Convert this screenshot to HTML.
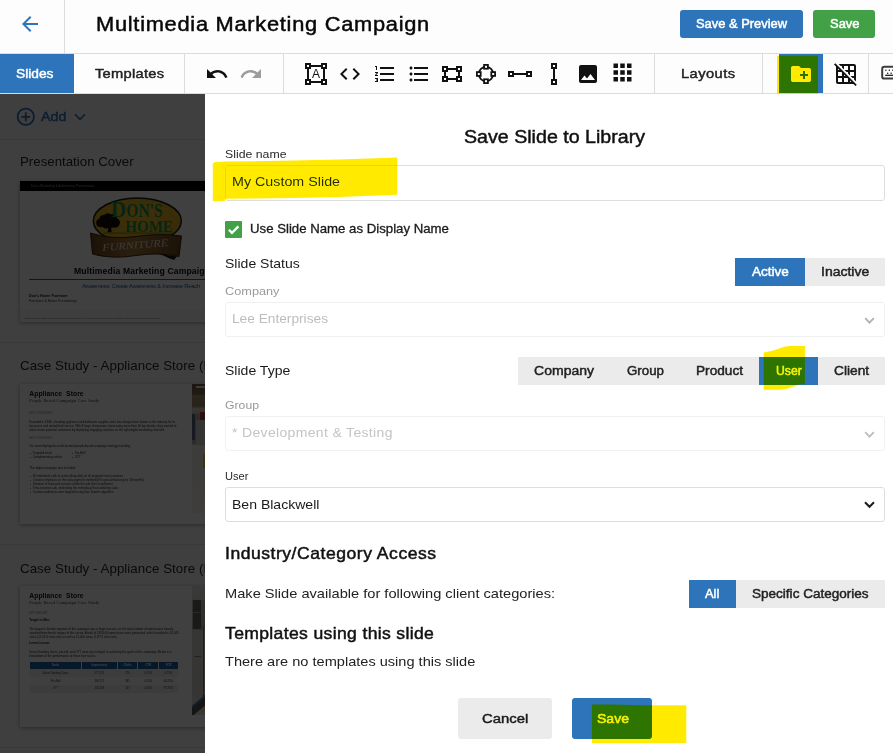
<!DOCTYPE html>
<html lang="en">
<head>
<meta charset="utf-8">
<title>Save Slide to Library</title>
<style>
html,body{margin:0;padding:0;overflow:hidden;}
body{width:893px;height:753px;overflow:hidden;background:#fdfdfd;font-family:"Liberation Sans",sans-serif;}
#root{position:relative;width:893px;height:753px;overflow:hidden;background:#fdfdfd;}
.abs{position:absolute;}
.t{position:absolute;white-space:pre;line-height:1;font-family:"Liberation Sans",sans-serif;transform-origin:0 50%;}
.vl{position:absolute;width:1px;background:#dcdcdc;}
.hl{position:absolute;height:1px;background:#dcdcdc;}
svg{position:absolute;overflow:visible;}
.btn{position:absolute;border-radius:3px;}
.seg{position:absolute;background:#ebebeb;}
.blue{background:#2e74ba;}
.hlt{position:absolute;background:#ffe800;mix-blend-mode:multiply;}
#sidebar{position:absolute;left:0;top:94px;width:205px;height:659px;background:#fafafa;overflow:hidden;}
#overlay{position:absolute;left:0;top:94px;width:205px;height:659px;background:rgba(0,0,0,0.75);}
#modal{position:absolute;left:205px;top:94px;width:688px;height:659px;background:#fff;}
.thumb{position:absolute;left:20px;width:250px;height:141px;background:#fff;box-shadow:0 1px 4px rgba(0,0,0,0.35);overflow:hidden;}
.sep{position:absolute;left:0;width:205px;height:1px;background:#e2e2e2;}
.field{position:absolute;left:225px;width:658px;border:1px solid #ddd;border-radius:3px;background:#fff;}
.tt{position:absolute;white-space:pre;line-height:1;}
td{padding:0;vertical-align:middle;overflow:hidden;}
</style>
</head>
<body>
<div id="root">

<!-- ===== top bar ===== -->
<div class="hl" style="left:0;top:53px;width:893px;"></div>
<div class="vl" style="left:64px;top:0;height:53px;"></div>
<svg style="left:18px;top:12px" width="24" height="24" viewBox="0 0 24 24"><path fill="#2e74ba" d="M20 11H7.83l5.59-5.59L12 4l-8 8 8 8 1.41-1.41L7.83 13H20v-2z"/></svg>
<div class="btn blue" style="left:680px;top:10px;width:123px;height:28px;"></div>
<div class="btn" style="left:813px;top:10px;width:62px;height:28px;background:#42a047;"></div>

<!-- ===== toolbar ===== -->
<div class="abs blue" style="left:0;top:54px;width:74px;height:39px;"></div>
<div class="hl" style="left:0;top:93px;width:893px;"></div>
<div class="vl" style="left:184px;top:54px;height:39px;"></div>
<div class="vl" style="left:283px;top:54px;height:39px;"></div>
<div class="vl" style="left:654px;top:54px;height:39px;"></div>
<div class="vl" style="left:762px;top:54px;height:39px;"></div>
<div class="vl" style="left:868px;top:54px;height:39px;"></div>
<svg style="left:205.3px;top:62.2px" width="24" height="24" viewBox="0 0 24 24"><path fill="#111" d="M12.5 8c-2.65 0-5.05.99-6.9 2.6L2 7v9h9l-3.62-3.62c1.39-1.16 3.16-1.88 5.12-1.88 3.54 0 6.55 2.31 7.6 5.5l2.37-.78C21.08 11.03 17.15 8 12.5 8z"/></svg>
<svg style="left:239.4px;top:62.2px" width="24" height="24" viewBox="0 0 24 24"><path fill="#9c9c9c" d="M18.4 10.6C16.55 8.99 14.15 8 11.5 8c-4.65 0-8.58 3.03-9.96 7.22L3.9 16c1.05-3.19 4.05-5.5 7.6-5.5 1.95 0 3.73.72 5.12 1.88L13 16h9V7l-3.6 3.6z"/></svg>
<svg style="left:338.0px;top:62.2px" width="24" height="24" viewBox="0 0 24 24"><path fill="#111" d="M9.4 16.6L4.8 12l4.6-4.6L8 6l-6 6 6 6 1.4-1.4zm5.2 0l4.6-4.6-4.6-4.6L16 6l6 6-6 6-1.4-1.4z"/></svg>
<svg style="left:373.2px;top:62.0px" width="24" height="24" viewBox="0 0 24 24"><path fill="#111" d="M2 17h2v.5H3v1h1v.5H2v1h3v-4H2v1zm1-9h1V4H2v1h1v3zm-1 3h1.8L2 13.1v.9h3v-1H3.2L5 10.9V10H2v1zm5-6v2h14V5H7zm0 14h14v-2H7v2zm0-6h14v-2H7v2z"/></svg>
<svg style="left:407.4px;top:62.0px" width="24" height="24" viewBox="0 0 24 24"><path fill="#111" d="M4 10.5c-.83 0-1.5.67-1.5 1.5s.67 1.5 1.5 1.5 1.5-.67 1.5-1.5-.67-1.5-1.5-1.5zm0-6c-.83 0-1.5.67-1.5 1.5S3.17 7.5 4 7.5 5.5 6.83 5.5 6 4.83 4.5 4 4.5zm0 12c-.83 0-1.5.68-1.5 1.5s.68 1.5 1.5 1.5 1.5-.68 1.5-1.5-.67-1.5-1.5-1.5zM7 19h14v-2H7v2zm0-6h14v-2H7v2zm0-8v2h14V5H7z"/></svg>
<svg style="left:576.0px;top:61.9px" width="24" height="24" viewBox="0 0 24 24"><path fill="#111" d="M21 19V5c0-1.1-.9-2-2-2H5c-1.1 0-2 .9-2 2v14c0 1.1.9 2 2 2h14c1.1 0 2-.9 2-2zM8.5 13.5l2.5 3.01L14.5 12l4.5 6H5l3.5-4.5z"/></svg>
<svg style="left:608.6px;top:59.4px" width="27" height="27" viewBox="0 0 24 24"><path fill="#111" d="M4 8h4V4H4v4zm6 12h4v-4h-4v4zm-6 0h4v-4H4v4zm0-6h4v-4H4v4zm6 0h4v-4h-4v4zm6-10v4h4V4h-4zm-6 4h4V4h-4v4zm6 6h4v-4h-4v4zm0 6h4v-4h-4v4z"/></svg>
<div class="abs blue" style="left:779px;top:54px;width:44px;height:39px;"></div>
<svg style="left:789.0px;top:62.0px" width="24" height="24" viewBox="0 0 24 24"><path fill="#fff" d="M20 6h-8l-2-2H4c-1.11 0-1.99.89-1.99 2L2 18c0 1.11.89 2 2 2h16c1.11 0 2-.89 2-2V8c0-1.11-.89-2-2-2zm-1 8h-3v3h-2v-3h-3v-2h3V9h2v3h3v2z"/></svg>
<svg style="left:833.5px;top:62.0px" width="24" height="24" viewBox="0 0 24 24"><path fill="#111" d="M8 4v1.45l2 2V4h4v4h-3.45l2 2H14v1.45l2 2V10h4v4h-3.45l2 2H20v1.45l2 2V4c0-1.1-.9-2-2-2H4.55l2 2H8zm8 0h4v4h-4V4zM1.27 1.27L0 2.55l2 2V20c0 1.1.9 2 2 2h15.46l2 2 1.27-1.27L1.27 1.27zM10 12.55L11.45 14H10v-1.45zm-6-6L5.45 8H4V6.55zM8 20H4v-4h4v4zm0-6H4v-4h3.45l.55.55V14zm6 6h-4v-4h3.45l.55.54V20zm2 0v-1.46L17.46 20H16z"/></svg>
<svg style="left:881px;top:65px" width="24" height="16" viewBox="0 0 24 16"><rect x="1.2" y="1.8" width="21" height="11.8" rx="2.2" fill="none" stroke="#3c3c3c" stroke-width="2"/><g fill="#222"><rect x="4.2" y="4.6" width="1.3" height="1.3"/><rect x="7.7" y="4.6" width="1.3" height="1.3"/><rect x="11.2" y="4.6" width="1.3" height="1.3"/><rect x="6" y="7.6" width="1.3" height="1.3"/><rect x="9.5" y="7.6" width="1.3" height="1.3"/><rect x="4.2" y="9.7" width="14" height="1.2" fill="#111"/></g></svg>
<svg style="left:305px;top:63px" width="22" height="22" viewBox="0 0 22 22"><rect x="3" y="3" width="16" height="16" fill="none" stroke="#111" stroke-width="2"/><rect x="1.00" y="1.00" width="4" height="4" fill="#fff" stroke="#111" stroke-width="2"/><rect x="17.00" y="1.00" width="4" height="4" fill="#fff" stroke="#111" stroke-width="2"/><rect x="1.00" y="17.00" width="4" height="4" fill="#fff" stroke="#111" stroke-width="2"/><rect x="17.00" y="17.00" width="4" height="4" fill="#fff" stroke="#111" stroke-width="2"/><text x="11" y="15.3" text-anchor="middle" font-family="Liberation Sans, sans-serif" font-size="12" fill="#111">A</text></svg>
<svg style="left:442px;top:66px" width="20" height="16" viewBox="0 0 20 16"><rect x="3" y="3" width="14" height="10" fill="none" stroke="#111" stroke-width="2"/><rect x="1.00" y="1.00" width="4" height="4" fill="#fff" stroke="#111" stroke-width="2"/><rect x="15.00" y="1.00" width="4" height="4" fill="#fff" stroke="#111" stroke-width="2"/><rect x="1.00" y="11.00" width="4" height="4" fill="#fff" stroke="#111" stroke-width="2"/><rect x="15.00" y="11.00" width="4" height="4" fill="#fff" stroke="#111" stroke-width="2"/></svg>
<svg style="left:476px;top:64px" width="20" height="20" viewBox="0 0 20 20"><circle cx="10" cy="10" r="7.2" fill="none" stroke="#111" stroke-width="1.8"/><rect x="8.10" y="0.90" width="3.8" height="3.8" fill="#fff" stroke="#111" stroke-width="1.8"/><rect x="8.10" y="15.30" width="3.8" height="3.8" fill="#fff" stroke="#111" stroke-width="1.8"/><rect x="0.90" y="8.10" width="3.8" height="3.8" fill="#fff" stroke="#111" stroke-width="1.8"/><rect x="15.30" y="8.10" width="3.8" height="3.8" fill="#fff" stroke="#111" stroke-width="1.8"/></svg>
<svg style="left:508px;top:71px" width="24" height="6" viewBox="0 0 24 6"><rect x="5" y="2" width="14" height="2" fill="#111"/><rect x="1.00" y="1.00" width="4" height="4" fill="#fff" stroke="#111" stroke-width="2"/><rect x="19.00" y="1.00" width="4" height="4" fill="#fff" stroke="#111" stroke-width="2"/></svg>
<svg style="left:551px;top:63px" width="6" height="22" viewBox="0 0 6 22"><rect x="2" y="5" width="2" height="12" fill="#111"/><rect x="1.00" y="1.00" width="4" height="4" fill="#fff" stroke="#111" stroke-width="2"/><rect x="1.00" y="17.00" width="4" height="4" fill="#fff" stroke="#111" stroke-width="2"/></svg>

<!-- ===== sidebar ===== -->
<div id="sidebar">
<div style="position:absolute;left:0;top:-94px;width:300px;height:753px;">
<!--SIDEBAR_START--><!-- add row -->
<svg style="left:15.2px;top:106px" width="21.6" height="21.6" viewBox="0 0 24 24"><path fill="#2e74ba" d="M13 7h-2v4H7v2h4v4h2v-4h4v-2h-4V7zm-1-5C6.48 2 2 6.48 2 12s4.48 10 10 10 10-4.48 10-10S17.52 2 12 2zm0 18c-4.41 0-8-3.59-8-8s3.59-8 8-8 8 3.59 8 8-3.59 8-8 8z"/></svg>
<svg style="left:74px;top:113px" width="12" height="8" viewBox="0 0 12 8"><path fill="none" stroke="#2e74ba" stroke-width="1.6" d="M1 1.2L6 6.4L11 1.2"/></svg>
<div class="sep" style="top:139px;"></div>
<div class="sep" style="top:342px;"></div>
<div class="sep" style="top:544px;"></div>
<div class="sep" style="top:747px;"></div>

<!-- slide 1 thumbnail -->
<div class="thumb" style="top:181px;">
 <div class="abs" style="left:0;top:0;width:250px;height:10px;background:#000;"></div>
 <span class="tt" style="left:11px;top:3.6px;font-size:3.3px;color:#9a9a9a;">Don's Marketing &amp; Advertising Presentation</span>
 <div class="abs" style="left:0;top:128.5px;width:250px;height:12.5px;background:#f7f7f7;"></div>
 <!-- logo -->
 <svg style="left:68px;top:14px" width="98" height="66" viewBox="88 195 98 66">
  <defs><linearGradient id="rb" x1="0" x2="1" y1="0" y2="0"><stop offset="0" stop-color="#6d4719"/><stop offset="0.45" stop-color="#a67b3c"/><stop offset="1" stop-color="#70491a"/></linearGradient>
  <radialGradient id="gd" cx="0.5" cy="0.4" r="0.7"><stop offset="0" stop-color="#f0c030"/><stop offset="1" stop-color="#d9a520"/></radialGradient></defs>
  <ellipse cx="137.3" cy="221" rx="44" ry="23" fill="url(#gd)" stroke="#221b06" stroke-width="1.5"/>
  <path d="M96.5 224.5 q-1.5 -4.5 3 -6 q0 -3.5 4.5 -3.5 q3 -3 7 -0.8 q5.5 -0.7 6 4 q4.5 2.5 2.3 6.8 q-1.2 3.3 -5.8 2.5 l-2.4 0.3 l0.6 4.4 l-4.2 0 l0.8 -4.3 q-3.7 1.6 -5.6 -0.8 q-5.2 0.6 -6.2 -2.6z" fill="#120f08"/>
  <rect x="103.5" y="232.7" width="72" height="0.7" fill="#1a8a44"/>
  <path d="M90.5 233 Q 112 240 136 236.5 Q 160 233 181.5 236 L 179 256.5 Q 158 252 136 255.5 Q 112 259.5 92.5 254 Z" fill="url(#rb)" stroke="#2a1a07" stroke-width="0.9"/>
  <path d="M160 254 L177 256.5 L174 260 Q168 258 160 254Z" fill="#1c1206"/>
  <text x="111" y="216.5" font-family="Liberation Serif, serif" font-weight="bold" font-size="23" fill="#1a9448" textLength="15.5" lengthAdjust="spacingAndGlyphs">D</text>
  <text x="126.5" y="216.5" font-family="Liberation Serif, serif" font-weight="bold" font-size="18.5" fill="#1a9448" textLength="36.5" lengthAdjust="spacingAndGlyphs">ON'S</text>
  <text x="125.6" y="231.9" font-family="Liberation Serif, serif" font-weight="bold" font-size="16.5" fill="#1a9448" textLength="47.5" lengthAdjust="spacingAndGlyphs">HOME</text>
  <text x="102.5" y="251" font-family="Liberation Serif, serif" font-size="10.2" font-style="italic" fill="#e9e0d0" textLength="66" lengthAdjust="spacingAndGlyphs" transform="rotate(-4.5 102.5 251)">FURNITURE</text>
 </svg>
 <span class="tt" style="left:54px;top:85.6px;font-size:8.6px;font-weight:bold;color:#0a0a0a;letter-spacing:0.15px;">Multimedia Marketing Campaign</span>
 <div class="abs" style="left:9px;top:98.3px;width:241px;height:0.6px;background:#555;"></div>
 <span class="tt" style="left:62px;top:101.8px;font-size:6px;color:#2a5d9f;letter-spacing:-0.3px;">Awareness: Create Awareness &amp; Increase Reach</span>
 <span class="tt" style="left:9px;top:113.7px;font-size:3.7px;font-weight:bold;color:#111;">Don's Home Furniture</span>
 <span class="tt" style="left:9px;top:118.9px;font-size:3.6px;color:#333;">Furniture &amp; Home Furnishings</span>
 <span class="tt" style="left:5px;top:137.2px;font-size:1.9px;color:#666;letter-spacing:0.02px;">This presentation contains confidential data and is intended solely for the named recipient. Unauthorised distribution of any part of this document is prohibited.</span>
</div>

<!-- slide 2 thumbnail -->
<div class="thumb" style="top:384px;height:140px;">
 <div class="abs" style="left:172px;top:0;width:78px;height:129px;overflow:hidden;background:linear-gradient(180deg,#6f6044 0,#7d6c4c 8%,#a89474 9%,#9c8864 17%,#e2d8c2 19%,#d6ccb8 22%,#b4b0aa 24%,#aeaaa4 46%,#f4f3ef 48%,#f0efeb 51%,#f2f1ed 100%);"><div class="abs" style="left:4px;top:2px;width:9px;height:2px;background:#efe8d8;"></div><div class="abs" style="left:8px;top:28px;width:6px;height:9px;background:#b83a3a;"></div><div class="abs" style="left:0;top:30px;width:3px;height:26px;background:#5a6478;"></div><div class="abs" style="left:4px;top:36px;width:9px;height:24px;background:#cfcdc8;"></div><div class="abs" style="left:11px;top:70px;width:3px;height:14px;background:#e8d020;"></div></div>
 <span class="tt" style="left:9.3px;top:6.5px;font-size:6.7px;font-weight:bold;color:#111;letter-spacing:0.1px;">Appliance  Store</span>
 <span class="tt" style="left:9.3px;top:15.1px;font-size:4.3px;font-weight:bold;color:#777;font-family:'Liberation Serif',serif;letter-spacing:0.12px;">People Based Campaign Case Study</span>
 <span class="tt" style="left:9.3px;top:28.1px;font-size:2.9px;color:#888;">KEY CONCERNS</span>
 <span class="tt" style="left:9.3px;top:36.3px;font-size:2.95px;color:#222;line-height:4.05px;width:150px;white-space:normal;">Founded in 1949, a leading appliance and bathroom supplies store has always been known in the industry for its low prices and unmatched service. With 8 large showrooms showcasing more than 50 top brands, they wanted to attract more potential customers by deploying engaging creatives on the right digital marketing channels.</span>
 <span class="tt" style="left:9.3px;top:53.1px;font-size:2.9px;color:#888;">KEY CONCERNS</span>
 <span class="tt" style="left:9.3px;top:61.1px;font-size:2.95px;color:#222;">Our team deployed a multi-faceted people-based campaign strategy including:</span>
 <span class="tt" style="left:10px;top:68.1px;font-size:2.95px;color:#222;">▪  Targeted email</span>
 <span class="tt" style="left:10px;top:71.5px;font-size:2.95px;color:#222;">▪  Complementary online</span>
 <span class="tt" style="left:52px;top:68.1px;font-size:2.95px;color:#222;">▪  Pre-Roll</span>
 <span class="tt" style="left:52px;top:71.5px;font-size:2.95px;color:#222;">▪  OTT</span>
 <span class="tt" style="left:9.3px;top:83.1px;font-size:2.95px;color:#222;">This digital campaign also included:</span>
 <span class="tt" style="left:10px;top:90.1px;font-size:2.95px;color:#222;line-height:4.02px;">▪  30 intentional calls to action (drop-offs) on all targeted email creatives
▪  Creative emphasis on the easy payment method (0% special financing for 18 months)
▪  Variation of front-end services within the ads (free installation)
▪  Time-sensitive ads, motivating the immediacy that called big sales
▪  Custom audiences were targeted using Don Imports algorithm</span>
</div>

<!-- slide 3 thumbnail -->
<div class="thumb" style="top:586px;height:141px;">
 <div class="abs" style="left:172px;top:0;width:78px;height:129px;overflow:hidden;background:linear-gradient(180deg,#e6e4e0 0,#dedcd8 10%,#c0beba 12%,#b8b6b2 33%,#d8d6d2 35%,#d4d2ce 80%,#e0deda 100%);"><div class="abs" style="left:1px;top:14px;width:8px;height:29px;background:#6a6866;"></div><div class="abs" style="left:1px;top:26px;width:8px;height:1px;background:#a09e9a;"></div><div class="abs" style="left:11px;top:40px;width:1px;height:70px;background:#7a7876;"></div><div class="abs" style="left:2px;top:70px;width:7px;height:1px;background:#8a8886;"></div><div class="abs" style="left:-6px;top:125px;width:40px;height:6px;background:#55534f;transform:rotate(-40deg);transform-origin:0 0;border-top:2px solid #4a78b0;"></div></div>
 <span class="tt" style="left:9.3px;top:6.5px;font-size:6.7px;font-weight:bold;color:#111;letter-spacing:0.1px;">Appliance  Store</span>
 <span class="tt" style="left:9.3px;top:15.1px;font-size:4.3px;font-weight:bold;color:#777;font-family:'Liberation Serif',serif;letter-spacing:0.12px;">People Based Campaign Case Study</span>
 <span class="tt" style="left:9.3px;top:26.1px;font-size:2.9px;color:#888;">KEY INSIGHT</span>
 <span class="tt" style="left:9.3px;top:33.3px;font-size:3.1px;font-weight:bold;color:#111;">Target to Men</span>
 <span class="tt" style="left:9.3px;top:41.1px;font-size:2.95px;color:#222;line-height:4.05px;width:152px;white-space:normal;">The target to female segment of the campaign was a huge success, as the total number of impressions heavily standard benchmark ranges of this sector. A total of 139,640 impressions were generated, which resulted in 16,345 clicks (11.61% view rate) as well as 11,000 views (7.87% click rate).</span>
 <span class="tt" style="left:9.3px;top:56.1px;font-size:3.1px;font-weight:bold;color:#111;">Learn Lesson</span>
 <span class="tt" style="left:9.3px;top:64.1px;font-size:2.95px;color:#222;line-height:4.05px;width:152px;white-space:normal;">Social Sanitary Users, pre-roll, and OTT were also integral in achieving the goals of this campaign. Below is a breakdown of the performance of these four tactics.</span>
 <table style="position:absolute;left:9.6px;top:75.5px;width:148.4px;table-layout:fixed;border-collapse:collapse;border-spacing:0;font-size:2.7px;line-height:3px;text-align:center;color:#333;font-family:'Liberation Sans',sans-serif;">
  <tr style="height:7.5px;background:#1f5f9f;color:#fff;font-weight:bold;"><td style="width:51.7px;border-right:0.5px solid #fff;">Tactic</td><td style="width:34.3px;border-right:0.5px solid #fff;">Impressions</td><td style="width:19.7px;border-right:0.5px solid #fff;">Clicks</td><td style="width:20.1px;border-right:0.5px solid #fff;">CTR</td><td>VCR</td></tr>
  <tr style="height:8px;background:#f0f0f0;"><td>Social Sanitary Users</td><td>577,125</td><td>270</td><td>0.05%</td><td>0.75%</td></tr>
  <tr style="height:8px;background:#fafafa;"><td>Pre-Roll</td><td>340,717</td><td>365</td><td>0.11%</td><td>64.25%</td></tr>
  <tr style="height:7.5px;background:#f0f0f0;"><td>OTT</td><td>242,069</td><td>147</td><td>0.06%</td><td>97.25%</td></tr>
 </table>
</div>
<!--SIDEBAR_END-->
<span class="t " style="left:40.8px;top:111.3px;font-size:12.7px;letter-spacing:0.05px;color:#2e74ba;transform:scaleX(1.120);-webkit-text-stroke:0.45px currentColor;">Add</span>
<span class="t " style="left:20.4px;top:157.4px;font-size:11.9px;letter-spacing:0.00px;color:#2a2a2a;transform:scaleX(1.116);">Presentation Cover</span>
<span class="t " style="left:20.4px;top:360.7px;font-size:11.9px;letter-spacing:0.04px;color:#2a2a2a;transform:scaleX(1.120);">Case Study - Appliance Store (Problem)</span>
<span class="t " style="left:20.4px;top:563.5px;font-size:11.9px;letter-spacing:0.04px;color:#2a2a2a;transform:scaleX(1.120);">Case Study - Appliance Store (Results)</span>
</div>
</div>
<div id="overlay"></div>

<!-- ===== modal ===== -->
<div id="modal"></div>

<!-- slide name input -->
<div class="field" style="top:165px;height:34px;"></div>
<!-- checkbox -->
<div class="abs" style="left:225px;top:221px;width:17px;height:17px;background:#42a047;border-radius:1px;"></div>
<svg style="left:227px;top:223px" width="13" height="13" viewBox="0 0 24 24"><path fill="none" stroke="#fff" stroke-width="4.2" stroke-linecap="butt" stroke-linejoin="miter" d="M3.5 12.5L9.2 18.2L21 6.2"/></svg>
<!-- status toggle -->
<div class="seg blue" style="left:735px;top:258px;width:70px;height:28px;"></div>
<div class="seg" style="left:805px;top:258px;width:80px;height:28px;"></div>
<!-- company select -->
<div class="field" style="top:302px;height:33px;border-color:#f0f0f0;"></div>
<svg style="left:864px;top:316.6px" width="11" height="8" viewBox="0 0 11 8"><path fill="none" stroke="#b0b0b0" stroke-width="1.8" d="M1.2 1.2L5.5 5.6L9.8 1.2"/></svg>
<!-- slide type segmented -->
<div class="seg" style="left:518px;top:357px;width:367px;height:28px;"></div>
<div class="seg blue" style="left:759px;top:357px;width:59px;height:28px;"></div>
<!-- group select -->
<div class="field" style="top:416px;height:33px;border-color:#f2f2f2;"></div>
<svg style="left:864px;top:430.6px" width="11" height="8" viewBox="0 0 11 8"><path fill="none" stroke="#bcbcbc" stroke-width="1.8" d="M1.2 1.2L5.5 5.6L9.8 1.2"/></svg>
<!-- user select -->
<div class="field" style="top:487px;height:33px;"></div>
<svg style="left:864px;top:501px" width="11" height="8" viewBox="0 0 11 8"><path fill="none" stroke="#1c1c1c" stroke-width="2" d="M1 1.2L5.5 5.8L10 1.2"/></svg>
<!-- category toggle -->
<div class="seg blue" style="left:689px;top:580px;width:47px;height:28px;"></div>
<div class="seg" style="left:736px;top:580px;width:149px;height:28px;"></div>
<!-- footer buttons -->
<div class="btn" style="left:458px;top:698px;width:94px;height:41px;background:#ebebeb;"></div>
<div class="btn blue" style="left:572px;top:698px;width:80px;height:41px;"></div>

<span class="t " style="left:95.5px;top:14.8px;font-size:19.5px;letter-spacing:0.64px;color:#080808;transform:scaleX(1.120);-webkit-text-stroke:0.45px currentColor;">Multimedia Marketing Campaign</span>
<span class="t " style="left:696.0px;top:18.0px;font-size:12.5px;letter-spacing:0.00px;color:#fff;transform:scaleX(1.031);-webkit-text-stroke:0.5px currentColor;">Save &amp; Preview</span>
<span class="t " style="left:829.5px;top:18.0px;font-size:12.5px;letter-spacing:-0.00px;color:#fff;transform:scaleX(1.035);-webkit-text-stroke:0.5px currentColor;">Save</span>
<span class="t " style="left:15.5px;top:67.3px;font-size:13.1px;letter-spacing:0.00px;color:#fff;transform:scaleX(1.051);-webkit-text-stroke:0.45px currentColor;">Slides</span>
<span class="t " style="left:95.0px;top:67.3px;font-size:13.1px;letter-spacing:0.24px;color:#222;transform:scaleX(1.120);-webkit-text-stroke:0.45px currentColor;">Templates</span>
<span class="t " style="left:681.4px;top:67.3px;font-size:13.1px;letter-spacing:0.40px;color:#222;transform:scaleX(1.120);-webkit-text-stroke:0.45px currentColor;">Layouts</span>
<span class="t " style="left:464.0px;top:127.8px;font-size:18px;letter-spacing:0.00px;color:#111;transform:scaleX(1.090);-webkit-text-stroke:0.45px currentColor;">Save Slide to Library</span>
<span class="t " style="left:225.0px;top:148.2px;font-size:11.6px;letter-spacing:0.00px;color:#2a2a2a;transform:scaleX(1.060);">Slide name</span>
<span class="t " style="left:232.0px;top:175.3px;font-size:13.2px;letter-spacing:0.00px;color:#2b2b15;transform:scaleX(1.084);">My Custom Slide</span>
<span class="t " style="left:250.0px;top:223.9px;font-size:11.9px;letter-spacing:0.00px;color:#1a1a1a;transform:scaleX(1.111);-webkit-text-stroke:0.28px currentColor;">Use Slide Name as Display Name</span>
<span class="t " style="left:225.0px;top:258.4px;font-size:12.7px;letter-spacing:0.00px;color:#1a1a1a;transform:scaleX(1.105);">Slide Status</span>
<span class="t " style="left:751.8px;top:265.7px;font-size:12.5px;letter-spacing:0.00px;color:#fff;transform:scaleX(1.081);-webkit-text-stroke:0.45px currentColor;">Active</span>
<span class="t " style="left:820.7px;top:265.7px;font-size:12.5px;letter-spacing:0.00px;color:#222;transform:scaleX(1.120);-webkit-text-stroke:0.45px currentColor;">Inactive</span>
<span class="t " style="left:225.0px;top:285.2px;font-size:11.6px;letter-spacing:0.00px;color:#9a9a9a;transform:scaleX(1.098);">Company</span>
<span class="t " style="left:232.0px;top:313.2px;font-size:12.8px;letter-spacing:0.00px;color:#bdbdbd;transform:scaleX(1.071);">Lee Enterprises</span>
<span class="t " style="left:225.0px;top:365.2px;font-size:12.7px;letter-spacing:0.00px;color:#1a1a1a;transform:scaleX(1.106);">Slide Type</span>
<span class="t " style="left:533.9px;top:364.7px;font-size:12.5px;letter-spacing:0.03px;color:#222;transform:scaleX(1.120);-webkit-text-stroke:0.45px currentColor;">Company</span>
<span class="t " style="left:626.7px;top:364.7px;font-size:12.5px;letter-spacing:0.00px;color:#222;transform:scaleX(1.062);-webkit-text-stroke:0.45px currentColor;">Group</span>
<span class="t " style="left:696.0px;top:364.7px;font-size:12.5px;letter-spacing:-0.00px;color:#222;transform:scaleX(1.091);-webkit-text-stroke:0.45px currentColor;">Product</span>
<span class="t " style="left:775.6px;top:364.7px;font-size:12.5px;letter-spacing:0.00px;color:#fff;transform:scaleX(0.977);-webkit-text-stroke:0.45px currentColor;">User</span>
<span class="t " style="left:833.8px;top:364.7px;font-size:12.5px;letter-spacing:0.00px;color:#222;transform:scaleX(1.101);-webkit-text-stroke:0.45px currentColor;">Client</span>
<span class="t " style="left:225.0px;top:398.9px;font-size:11.6px;letter-spacing:0.00px;color:#9a9a9a;transform:scaleX(1.055);">Group</span>
<span class="t " style="left:232.0px;top:427.4px;font-size:12.5px;letter-spacing:0.30px;color:#c4c4c4;transform:scaleX(1.120);">* Development &amp; Testing</span>
<span class="t " style="left:225.0px;top:470.2px;font-size:11.6px;letter-spacing:0.00px;color:#2a2a2a;transform:scaleX(0.956);">User</span>
<span class="t " style="left:232.0px;top:498.0px;font-size:13px;letter-spacing:0.00px;color:#1a1a1a;transform:scaleX(1.080);">Ben Blackwell</span>
<span class="t " style="left:225.0px;top:545.5px;font-size:15.7px;letter-spacing:0.46px;color:#111;transform:scaleX(1.120);-webkit-text-stroke:0.45px currentColor;">Industry/Category Access</span>
<span class="t " style="left:225.0px;top:586.7px;font-size:13.3px;letter-spacing:0.00px;color:#222;transform:scaleX(1.100);">Make Slide available for following client categories:</span>
<span class="t " style="left:705.4px;top:587.7px;font-size:12.5px;letter-spacing:-0.00px;color:#fff;transform:scaleX(1.028);-webkit-text-stroke:0.45px currentColor;">All</span>
<span class="t " style="left:752.0px;top:587.7px;font-size:12.5px;letter-spacing:0.00px;color:#222;transform:scaleX(1.083);-webkit-text-stroke:0.45px currentColor;">Specific Categories</span>
<span class="t " style="left:225.0px;top:626.3px;font-size:15.7px;letter-spacing:0.31px;color:#111;transform:scaleX(1.120);-webkit-text-stroke:0.45px currentColor;">Templates using this slide</span>
<span class="t " style="left:225.0px;top:655.0px;font-size:13.3px;letter-spacing:0.00px;color:#222;transform:scaleX(1.096);">There are no templates using this slide</span>
<span class="t " style="left:481.7px;top:711.5px;font-size:13.6px;letter-spacing:0.00px;color:#1a1a1a;transform:scaleX(1.094);-webkit-text-stroke:0.45px currentColor;">Cancel</span>
<span class="t " style="left:596.5px;top:711.5px;font-size:13.6px;letter-spacing:0.00px;color:#fff;transform:scaleX(1.030);-webkit-text-stroke:0.45px currentColor;">Save</span>

<!-- yellow highlighter annotations -->
<svg style="left:0;top:0;mix-blend-mode:darken;" width="893" height="753" viewBox="0 0 893 753">
<g fill="#ffea00">
<path d="M212.8 165 Q212.8 162.2 216 162 L227 161.6 L294.6 160.5 L339 159.4 L384 158 L397.3 157.4 L397.3 194.8 L339 197 L294 198 L227 198.8 L225 198.8 L225 201 L212.8 201 Z"/>
<path d="M777 55.7 L818 55.7 L818 93.7 L777 93.7 Z"/>
<path d="M763.7 352.5 Q 770 352 778 349 Q 785 346 790 345.9 L804.9 345.9 L804.9 384.5 L800 384.3 Q 793 387 786 389 Q 782 389.8 779.6 389.8 L763.7 389.8 Z"/>
<path d="M591.9 704.4 L612 704.4 Q 650 705.5 686.3 705.2 L686.3 743 L591.9 743 Z"/>
</g>
</svg>

</div>
</body>
</html>
